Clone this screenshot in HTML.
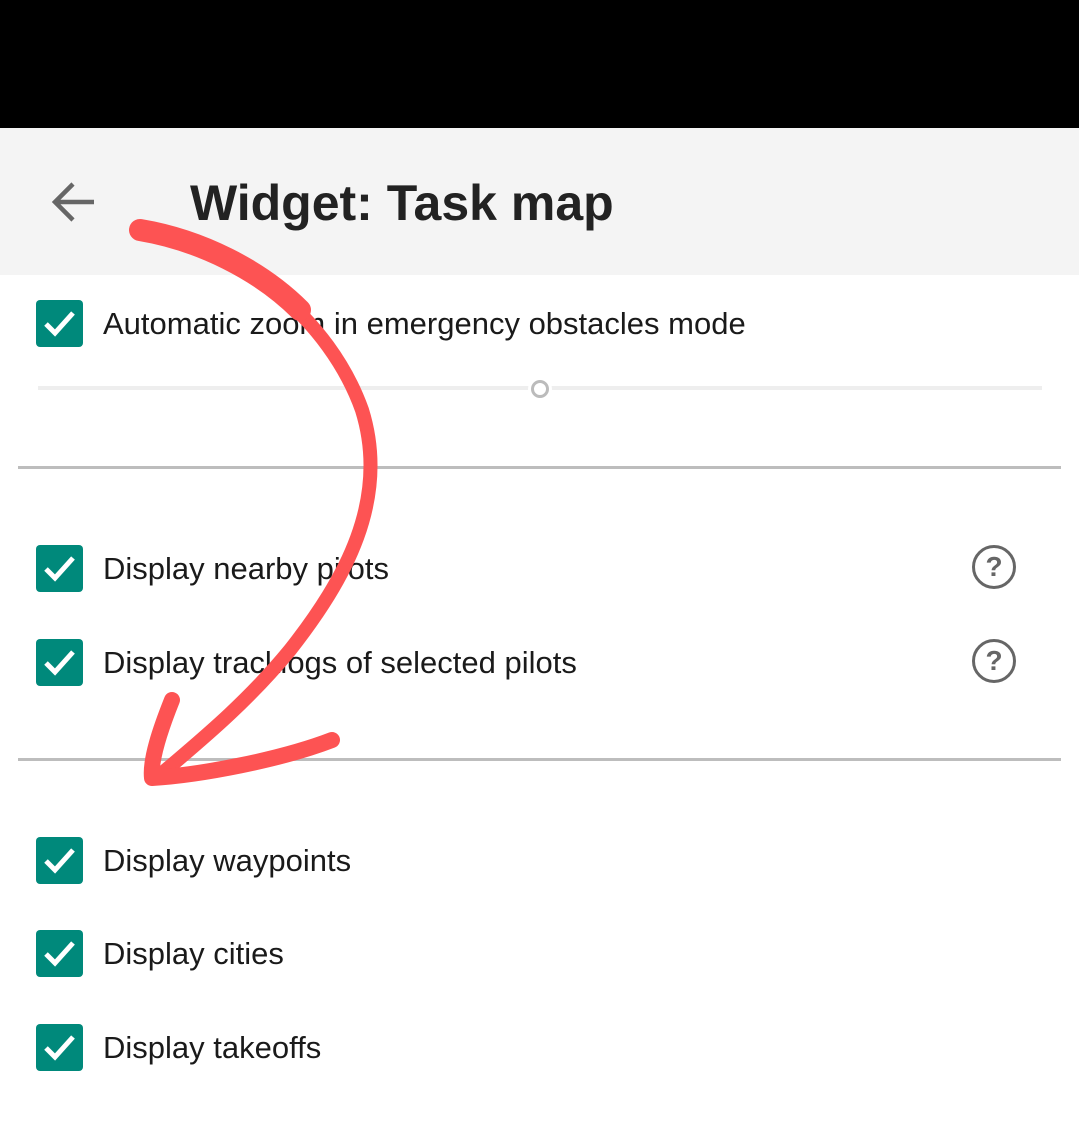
<!DOCTYPE html>
<html><head><meta charset="utf-8"><style>
body{margin:0;width:1079px;height:1142px;background:#fff;position:relative;overflow:hidden;font-family:"Liberation Sans",sans-serif;}
.top{position:absolute;left:0;top:0;width:1079px;height:128px;background:#000}
.bar{position:absolute;left:0;top:128px;width:1079px;height:147px;background:#f4f4f4}
.title{position:absolute;left:190px;top:174px;font-size:50px;font-weight:bold;color:#222;white-space:nowrap}
.cb{position:absolute;left:36px;width:47px;height:47px;background:#00897b;border-radius:4px}
.cb svg{position:absolute;left:0;top:0}
.lbl{position:absolute;left:103px;font-size:31px;color:#1a1a1a;white-space:nowrap}
.hr{position:absolute;left:18px;width:1043px;height:3px;background:#bdbdbd}
.q{position:absolute;left:972px;width:38px;height:38px;border:3px solid #666;border-radius:50%;text-align:center;font:bold 28px/38px "Liberation Sans",sans-serif;color:#666}
</style></head><body>
<div class="top"></div>
<div class="bar"></div>
<svg style="position:absolute;left:50px;top:180px" width="48" height="44"><path d="M44 22H6M23 4L5 22L23 40" stroke="#666" stroke-width="4.5" fill="none"/></svg>
<div class="title">Widget: Task map</div>

<div class="cb" style="top:300px"><svg width="47" height="47"><path d="M10 24L19 33L37 13" stroke="#fff" stroke-width="5" fill="none"/></svg></div>
<div class="lbl" style="top:306px">Automatic zoom in emergency obstacles mode</div>
<div style="position:absolute;left:38px;top:386px;width:1004px;height:4px;background:#eee"></div>
<div style="position:absolute;left:528px;top:377px;width:24px;height:24px;background:#fff;border-radius:50%"></div>
<div style="position:absolute;left:531px;top:380px;width:12px;height:12px;border:3px solid #bbb;border-radius:50%"></div>
<div class="hr" style="top:466px"></div>

<div class="cb" style="top:545px"><svg width="47" height="47"><path d="M10 24L19 33L37 13" stroke="#fff" stroke-width="5" fill="none"/></svg></div>
<div class="lbl" style="top:551px">Display nearby pilots</div>
<div class="q" style="top:545px">?</div>
<div class="cb" style="top:639px"><svg width="47" height="47"><path d="M10 24L19 33L37 13" stroke="#fff" stroke-width="5" fill="none"/></svg></div>
<div class="lbl" style="top:645px">Display tracklogs of selected pilots</div>
<div class="q" style="top:639px">?</div>
<div class="hr" style="top:758px"></div>

<div class="cb" style="top:837px"><svg width="47" height="47"><path d="M10 24L19 33L37 13" stroke="#fff" stroke-width="5" fill="none"/></svg></div>
<div class="lbl" style="top:843px">Display waypoints</div>
<div class="cb" style="top:930px"><svg width="47" height="47"><path d="M10 24L19 33L37 13" stroke="#fff" stroke-width="5" fill="none"/></svg></div>
<div class="lbl" style="top:936px">Display cities</div>
<div class="cb" style="top:1024px"><svg width="47" height="47"><path d="M10 24L19 33L37 13" stroke="#fff" stroke-width="5" fill="none"/></svg></div>
<div class="lbl" style="top:1030px">Display takeoffs</div>

<svg style="position:absolute;left:0;top:0" width="1079" height="1142">
<path d="M140 230C240 245 330 320 362 410C390 500 345 580 290 650C245 705 195 745 160 775" stroke="#fd5353" stroke-width="14" fill="none" stroke-linecap="round"/>
<path d="M140 230C200 240 260 270 300 310" stroke="#fd5353" stroke-width="22" fill="none" stroke-linecap="round"/>
<path d="M172 700C160 730 150 760 152 778C200 775 280 760 332 740" stroke="#fd5353" stroke-width="16" fill="none" stroke-linecap="round" stroke-linejoin="round"/>
</svg>
</body></html>
